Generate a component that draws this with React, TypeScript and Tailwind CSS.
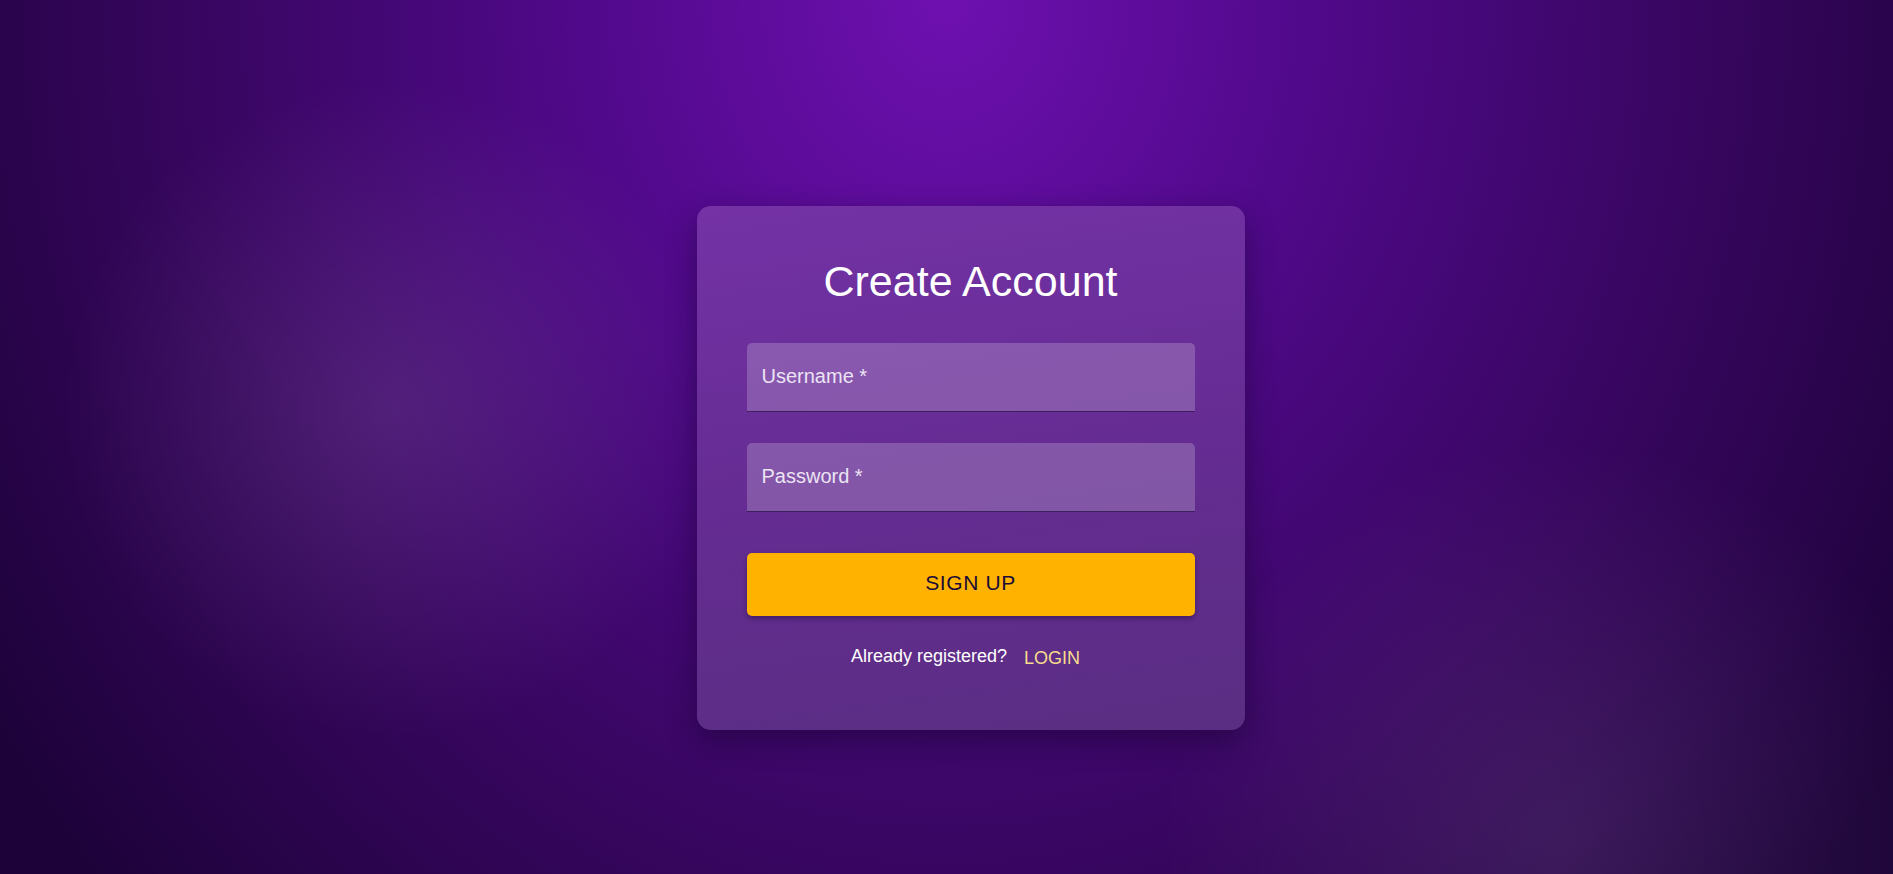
export default function App() {
  return (
    <div className="flex min-h-[874px] w-full items-start justify-center bg-[radial-gradient(circle_330px_at_390px_410px,rgba(255,255,255,0.1),transparent),radial-gradient(circle_400px_at_1560px_840px,rgba(255,255,255,0.09),transparent),radial-gradient(ellipse_1150px_1350px_at_50%_0%,#6e10b0_0%,#50098a_32%,#37065f_66%,#1c0238_100%)] pl-[48px] pt-[206px] font-['Liberation_Sans',Arial,sans-serif]">
      <div className="flex w-[548px] flex-col rounded-[14px] bg-[linear-gradient(172deg,#7432a5_0%,#652c93_50%,#5a2e82_100%)] px-[50px] pb-[60px] pt-[50px] shadow-[0_10px_30px_rgba(15,0,35,0.45)]">
        <h1 className="text-center text-[43px] leading-[50px] text-white">Create Account</h1>

        <div className="mt-[37px] flex flex-col gap-[31px]">
          <input
            type="text"
            placeholder="Username *"
            className="h-[69px] w-full rounded-t-[5px] border-b border-[#3d1f5c] bg-white/20 px-[15px] pb-[2px] text-[20px] text-white outline-none placeholder:text-[#ece4f4]"
          />
          <input
            type="password"
            placeholder="Password *"
            className="h-[69px] w-full rounded-t-[5px] border-b border-[#3d1f5c] bg-white/20 px-[15px] pb-[2px] text-[20px] text-white outline-none placeholder:text-[#ece4f4]"
          />
        </div>

        <button className="mt-[41px] h-[63px] w-full rounded-[5px] bg-[#ffb300] pb-[3px] text-[21px] tracking-[0.6px] text-[#1b0b36] shadow-[0_3px_5px_rgba(20,0,40,0.35)]">
          SIGN UP
        </button>

        <div className="mt-[28px] flex items-start justify-center gap-[7px]">
          <span className="text-[18px] leading-[24px] text-white">Already registered?</span>
          <button className="px-[10px] pt-[2px] text-[18px] leading-[24px] text-[#f7dc8c]">LOGIN</button>
        </div>
      </div>
    </div>
  );
}
